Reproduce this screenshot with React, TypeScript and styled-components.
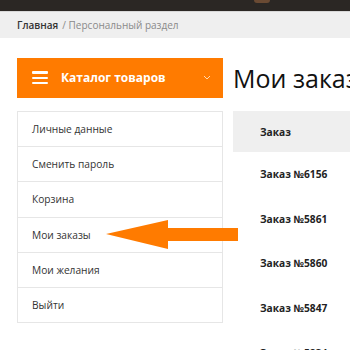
import * as React from "react";
import styled, { createGlobalStyle } from "styled-components";

const GlobalStyle = createGlobalStyle`
  body {
    margin: 0;
    font-family: "Open Sans", "Liberation Sans", sans-serif;
    background: #ffffff;
    color: #222;
  }
`;

const Page = styled.div`
  width: 350px;
  height: 350px;
  overflow: hidden;
  position: relative;
`;

const TopBar = styled.div`
  height: 11px;
  background: #2b2724;
  border-bottom: 1px solid #d8d8d8;
  display: flex;
  justify-content: flex-end;
  padding-right: 80px;
`;

const TopBadge = styled.div`
  width: 16px;
  height: 3px;
  border-radius: 0 0 6px 6px;
  background: #6a4a33;
`;

const Breadcrumbs = styled.div`
  height: 26px;
  background: #efefef;
  display: flex;
  align-items: center;
  padding-left: 17px;
  font-size: 10px;
  color: #8a8a8a;
`;

const Crumb = styled.span`
  color: #333;
  font-weight: 600;
  margin-right: 4px;
`;

const Body = styled.div`
  display: flex;
  gap: 10px;
  padding: 20px 0 0 17px;
`;

const Sidebar = styled.div`
  width: 206px;
  flex-shrink: 0;
  display: flex;
  flex-direction: column;
  gap: 13.5px;
`;

const CatalogButton = styled.div`
  height: 39.5px;
  background: #ff7b00;
  color: #fff;
  display: flex;
  align-items: center;
  padding: 0 12px 0 15px;
  font-size: 12px;
  font-weight: 700;
`;

const Burger = styled.div`
  width: 16px;
  display: flex;
  flex-direction: column;
  gap: 3px;
  margin-right: 13px;

  span {
    height: 2.4px;
    background: #fff;
    border-radius: 1px;
  }
`;

const CatalogLabel = styled.span`
  flex: 1;
`;

const Menu = styled.div`
  border: 1px solid #e6e6e6;
  display: flex;
  flex-direction: column;
`;

const MenuItem = styled.div`
  height: 34.2px;
  display: flex;
  align-items: center;
  padding-left: 14px;
  font-size: 10.2px;
  color: #333;
  & + & {
    border-top: 1px solid #e6e6e6;
  }
`;

const Main = styled.div`
  flex: 1;
  min-width: 0;
`;

const Title = styled.h1`
  margin: 0 0 13.5px;
  height: 39.5px;
  display: flex;
  align-items: center;
  font-size: 25px;
  font-weight: 400;
  color: #111;
  white-space: nowrap;
`;

const Table = styled.div`
  display: flex;
  flex-direction: column;
`;

const HeaderRow = styled.div`
  height: 41px;
  background: #efefef;
  display: flex;
  align-items: center;
  padding-left: 27px;
  font-size: 10.2px;
  font-weight: 700;
  color: #222;
`;

const Row = styled.div`
  height: 44.6px;
  display: flex;
  align-items: center;
  padding-left: 27px;
  font-size: 10.2px;
  font-weight: 700;
  color: #222;
  &:first-of-type {
    margin-top: 1px;
  }
`;

const Arrow = styled.svg`
  position: absolute;
  left: 104px;
  top: 219px;
`;

const orders = ["6156", "5861", "5860", "5847", "5834"];
const menu = ["Личные данные", "Сменить пароль", "Корзина", "Мои заказы", "Мои желания", "Выйти"];

export default function App() {
  return (
    <Page>
      <GlobalStyle />
      <TopBar>
        <TopBadge />
      </TopBar>
      <Breadcrumbs>
        <Crumb>Главная</Crumb>/ Персональный раздел
      </Breadcrumbs>
      <Body>
        <Sidebar>
          <CatalogButton>
            <Burger>
              <span />
              <span />
              <span />
            </Burger>
            <CatalogLabel>Каталог товаров</CatalogLabel>
            <svg width="8" height="5" viewBox="0 0 8 5">
              <path d="M1 1 L4 4 L7 1" fill="none" stroke="#ffd9b0" strokeWidth="1" />
            </svg>
          </CatalogButton>
          <Menu>
            {menu.map((m) => (
              <MenuItem key={m}>{m}</MenuItem>
            ))}
          </Menu>
        </Sidebar>
        <Main>
          <Title>Мои заказы</Title>
          <Table>
            <HeaderRow>Заказ</HeaderRow>
            {orders.map((o) => (
              <Row key={o}>Заказ №{o}</Row>
            ))}
          </Table>
        </Main>
      </Body>
      <Arrow width="136" height="32" viewBox="0 0 136 32">
        <polygon points="2,15 64,1 64,9 134,9 134,22 64,22 64,30" fill="#ff7b00" />
      </Arrow>
    </Page>
  );
}
